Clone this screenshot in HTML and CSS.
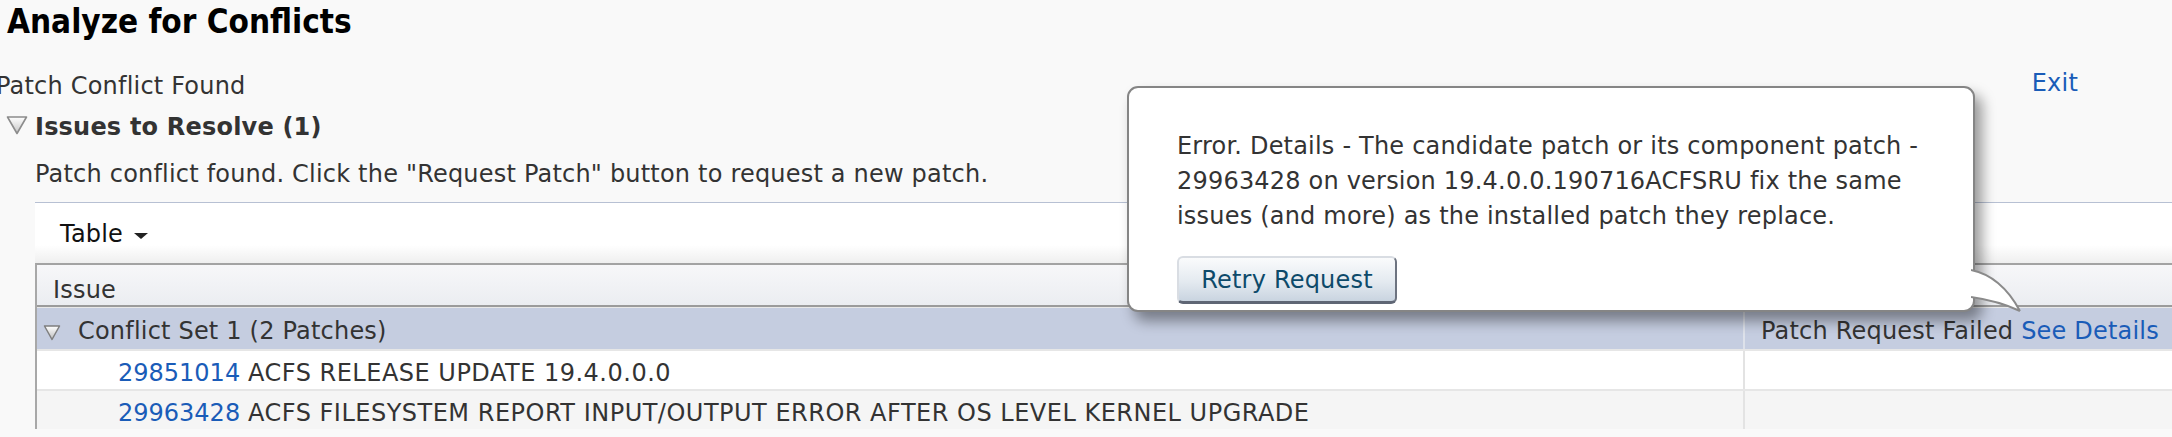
FILE: index.html
```html
<!DOCTYPE html>
<html>
<head>
<meta charset="utf-8">
<link rel="stylesheet" href="styles.css">
</head>
<body>
<div class="page">
  <h1 class="title">Analyze for Conflicts</h1>
  <div class="status-row">
    <span class="status">Patch Conflict Found</span>
    <a class="link exit">Exit</a>
  </div>
  <div class="section-head">
    <svg class="disclosure big" width="22" height="20" viewBox="0 0 22 20">
      <defs><linearGradient id="g1" x1="0" y1="0" x2="0" y2="1"><stop offset="0" stop-color="#ffffff"/><stop offset="1" stop-color="#c4c4c4"/></linearGradient></defs>
      <path d="M1.5 2 H20.5 L11 18.5 Z" fill="url(#g1)" stroke="#8c8c8c" stroke-width="1.6" stroke-linejoin="round"/>
    </svg>
    <span class="section-title">Issues to Resolve (1)</span>
  </div>
  <div class="section-body">
    <p class="intro">Patch conflict found. Click the "Request Patch" button to request a new patch.</p>
    <div class="table-wrap">
      <div class="toolbar">
        <span class="menu">Table</span><span class="caret"></span>
      </div>
      <div class="table">
        <div class="thead">
          <div class="cell c-issue">Issue</div>
          <div class="cell c-status"></div>
        </div>
        <div class="row group">
          <div class="cell c-issue">
            <svg class="disclosure small" width="18" height="17" viewBox="0 0 18 17">
              <defs><linearGradient id="g2" x1="0" y1="0" x2="0" y2="1"><stop offset="0" stop-color="#ffffff"/><stop offset="1" stop-color="#bdbdbd"/></linearGradient></defs>
              <path d="M1.5 2 H16.5 L9 15.5 Z" fill="url(#g2)" stroke="#7e7e7e" stroke-width="1.5" stroke-linejoin="round"/>
            </svg>Conflict Set 1 (2 Patches)</div>
          <div class="cell c-status">Patch Request Failed <a class="link">See Details</a></div>
        </div>
        <div class="row">
          <div class="cell c-issue patch"><a class="link">29851014</a> <span class="desc">ACFS RELEASE UPDATE 19.4.0.0.0</span></div>
          <div class="cell c-status"></div>
        </div>
        <div class="row alt">
          <div class="cell c-issue patch"><a class="link">29963428</a> <span class="desc">ACFS FILESYSTEM REPORT INPUT/OUTPUT ERROR AFTER OS LEVEL KERNEL UPGRADE</span></div>
          <div class="cell c-status"></div>
        </div>
      </div>
    </div>
  </div>

  <div class="popup">
    <p class="popup-text">Error. Details - The candidate patch or its component patch -<br>29963428 on version 19.4.0.0.190716ACFSRU fix the same<br>issues (and more) as the installed patch they replace.</p>
    <button class="btn">Retry Request</button>
    <svg class="tail" width="56" height="50" viewBox="0 0 56 50">
      <path d="M0 2 Q30 8 49 43 Q28 33 0 29 Z" fill="#fff"/>
      <path d="M0 2 Q30 8 49 43 M49 43 Q28 33 0 29" fill="none" stroke="#8a8a8a" stroke-width="2"/>
    </svg>
  </div>
</div>
</body>
</html>
```

FILE: styles.css
```css
* { box-sizing: border-box; }
html, body { margin: 0; padding: 0; }
body {
  background: #f9f9f9;
  font-family: "DejaVu Sans", sans-serif;
  font-size: 24px;
  letter-spacing: 0.2px;
  color: #333;
  width: 2172px;
  height: 437px;
  overflow: hidden;
}
.page { position: relative; }
.link { color: #1a5cb8; text-decoration: none; }

.title {
  margin: 2px 0 0 7px;
  font-family: "DejaVu Sans Condensed", "DejaVu Sans", sans-serif;
  font-stretch: condensed;
  font-size: 33px;
  letter-spacing: 0;
  line-height: 40px;
  font-weight: bold;
  color: #000;
}
.status-row {
  display: flex;
  justify-content: space-between;
  margin-top: 29px;
  line-height: 30px;
  padding-right: 94px;
}
.status { margin-left: -4px; }
.exit { margin-top: -3px; }

.section-head {
  display: flex;
  align-items: center;
  margin-top: 11px;
  line-height: 30px;
  padding-left: 6px;
}
.section-title { font-weight: bold; margin-left: 7px; }

.disclosure { display: inline-block; }
.disclosure.big { margin-top: -4px; }
.disclosure.small { margin-right: 17px; vertical-align: -2px; }

.section-body { padding-left: 35px; }
.intro { margin: 17px 0 0; line-height: 30px; }

.table-wrap {
  margin-top: 13px;
  border-top: 1px solid #b7c0d3;
}
.toolbar {
  height: 60px;
  padding: 16px 0 0 25px;
  line-height: 30px;
  color: #111;
  background: linear-gradient(#fff 0, #fff 70%, #efefef 100%);
}
.caret {
  display: inline-block;
  width: 0; height: 0;
  border-left: 7px solid transparent;
  border-right: 7px solid transparent;
  border-top: 6px solid #222;
  margin-left: 11px;
  vertical-align: 3px;
}
.table {
  border-top: 2px solid #a3a3a3;
  border-left: 2px solid #a8a8a8;
}
.thead, .row { display: flex; }
.cell { line-height: 30px; white-space: nowrap; }
.c-issue { width: 1708px; flex: none; }
.c-status { flex: 1; }
.thead {
  height: 42px;
  padding-top: 10px;
  background: linear-gradient(#f7f7f9, #ebedf1);
  border-bottom: 2px solid #9b9b9b;
}
.thead .c-issue { padding-left: 16px; }
.row {
  height: 40px;
  background: #fff;
  border-bottom: 2px solid #e6e6e6;
}
.row .cell { padding-top: 7px; }
.row .c-issue { border-right: 2px solid #e3e3e3; }
.row .c-status { padding-left: 16px; }
.group { height: 44px; background: #c5cde0; border-top: 1px solid #e8e8e8; }
.group .cell { padding-top: 8px; }
.group .c-issue { padding-left: 6px; border-right-color: #dde1ea; }
.row.alt { background: #f5f5f5; border-bottom: none; height: 38px; }
.patch { padding-left: 81px; }
.patch .link { letter-spacing: 0; }
.desc { letter-spacing: 0.5px; }

.popup {
  position: absolute;
  left: 1127px;
  top: 84px;
  width: 848px;
  height: 226px;
  background: #fff;
  border: 2px solid #858585;
  border-radius: 11px;
  box-shadow: 7px 9px 14px rgba(0,0,0,0.4);
  padding: 41px 0 0 48px;
}
.popup-text { margin: 0; line-height: 35px; color: #333; }
.btn {
  display: block;
  margin-top: 22px;
  width: 220px;
  height: 48px;
  font: inherit;
  letter-spacing: inherit;
  color: #0d4a6a;
  background: linear-gradient(#fafbfc, #e4eaf0 55%, #c9d4e0);
  border: 2px solid #d9dde3;
  border-right-color: #6d7380;
  border-bottom: 3px solid #5f6674;
  border-radius: 6px;
  padding: 0;
}
.tail {
  position: absolute;
  left: calc(100% - 2px);
  top: 180px;
}
```
